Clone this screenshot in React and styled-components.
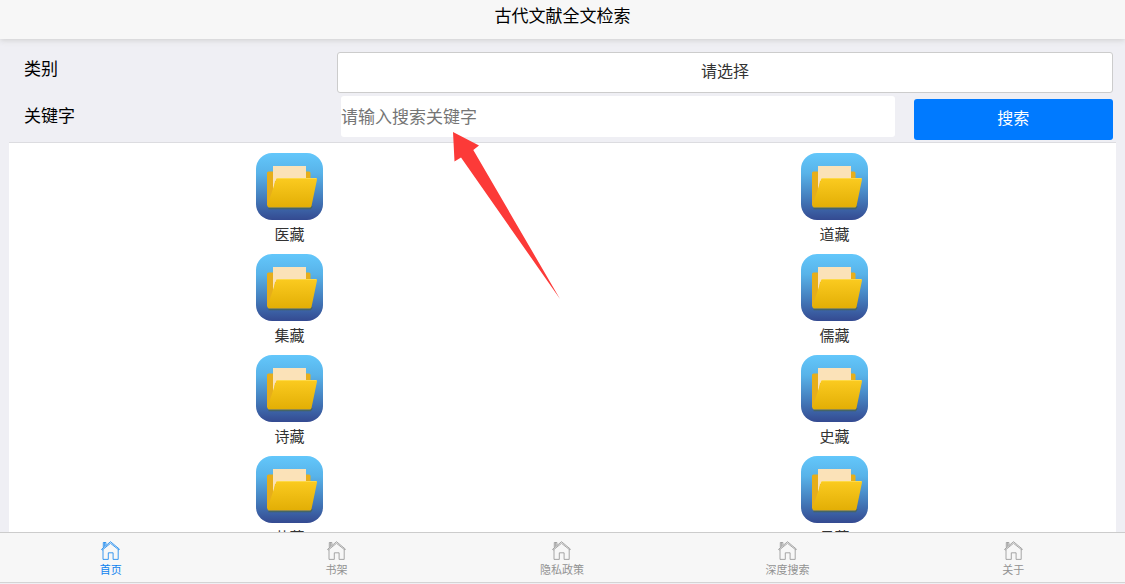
import React, { useId, useState } from "react";
import styled, { createGlobalStyle } from "styled-components";

const GlobalStyle = createGlobalStyle`
  * { box-sizing: border-box; }
  body {
    margin: 0;
    background: #efeff4;
    color: #000;
    font-family: "Noto Sans CJK SC", sans-serif;
    font-size: 17px;
    line-height: 20px;
  }
  button, input, select { font-family: inherit; margin: 0; }
`;

const Page = styled.div`
  display: flex;
  flex-direction: column;
  height: 100vh;
  overflow: hidden;
`;

const Header = styled.header`
  flex: none;
  padding: 5px 12px 14px;
  background: #f7f7f7;
  box-shadow: 0 1px 6px #ccc;
  text-align: center;
`;

const Title = styled.h1`
  margin: 0;
  font-size: 17px;
  font-weight: 400;
  line-height: 20px;
`;

const Content = styled.main`
  flex: 1;
  min-height: 0;
  display: flex;
  flex-direction: column;
  padding: 13px 9px 0;
`;

const SearchForm = styled.form`
  display: flex;
  flex-direction: column;
  gap: 3px;
  padding-bottom: 2px;
`;

const FormRow = styled.div`
  display: grid;
  grid-template-columns: ${(p) => (p.$withAction ? "30% 50% 20%" : "30% 70%")};
`;

const Label = styled.label`
  padding: ${(p) => p.$top}px 0 0 15px;
`;

const Category = styled.select`
  height: 41px;
  margin: 0 3px 0 -4px;
  padding: 0 0 5px;
  appearance: none;
  border: 1px solid #ccc;
  border-radius: 3px;
  background: #fff;
  color: #333;
  font-size: 16px;
  text-align: center;
  text-align-last: center;
`;

const KeywordField = styled.div`
  position: relative;
`;

const Keyword = styled.input`
  display: block;
  width: 100%;
  height: 41px;
  padding: 0 0 3px;
  border: 0;
  border-radius: 3px;
  background: #fff;
  font-size: 17px;
  &::placeholder { color: #757575; opacity: 1; }
`;

const SearchButton = styled.button`
  height: 41px;
  margin: 3px 3px 0 19px;
  padding: 0 0 5px;
  border: 0;
  border-radius: 3px;
  background: #007aff;
  color: #fff;
  font-size: 16px;
`;

const Pointer = styled.svg`
  position: absolute;
  top: 36px;
  left: 112px;
  width: 108px;
  height: 168px;
  pointer-events: none;
`;

const Library = styled.nav`
  flex: 1;
  min-height: 0;
  overflow: hidden;
  display: grid;
  grid-template-columns: 1fr 1fr;
  align-content: start;
  row-gap: 10px;
  padding: 10px 9px 0 8px;
  border-top: 1px solid #dcdce0;
  background: #fff;
`;

const Folder = styled.a`
  display: flex;
  flex-direction: column;
  align-items: center;
  gap: 4px;
  color: #333;
  font-size: 15px;
  text-decoration: none;
  svg { display: block; width: 67px; height: 67px; }
`;

const TabBar = styled.nav`
  flex: none;
  display: flex;
  margin: 0 -2px 1px -1px;
  border-top: 1px solid #ccc;
  border-bottom: 1px solid #d4d4d4;
  background: #f7f7f7;
`;

const Tab = styled.a`
  flex: 1;
  display: flex;
  flex-direction: column;
  align-items: center;
  gap: 2px;
  padding: 8px 2px 5px 0;
  color: ${(p) => (p.$active ? "#0d82ee" : "#929292")};
  font-size: 11px;
  line-height: 15px;
  text-decoration: none;
  svg { display: block; width: 19px; height: 19px; }
`;

function FolderIcon() {
  const id = useId();
  return (
    <svg viewBox="0 0 67 67" aria-hidden="true">
      <defs>
        <linearGradient id={id + "sky"} x1="0" y1="0" x2="0" y2="1">
          <stop offset="0" stopColor="#63c7fb" />
          <stop offset=".3" stopColor="#58b3e9" />
          <stop offset=".65" stopColor="#4580bf" />
          <stop offset="1" stopColor="#344a91" />
        </linearGradient>
        <linearGradient id={id + "front"} x1="0" y1="0" x2="0" y2="1">
          <stop offset="0" stopColor="#fbcb20" />
          <stop offset="1" stopColor="#e2ae05" />
        </linearGradient>
      </defs>
      <rect width="67" height="67" rx="16" fill={`url(#${id}sky)`} />
      <path d="M12.500 55.500H54.500L56 53" stroke="#4b663f" strokeOpacity=".65" strokeWidth="1.500" fill="none" />
      <path d="M12.500 18.500H53Q54.500 18.500 54.500 20V53H12.500Q11 53 11 51.500V20Q11 18.500 12.500 18.500Z" fill="#e6ae1a" />
      <path d="M17 13H50V28H19L17 42Z" fill="#fbe2b8" />
      <path d="M21.500 25H60Q61.200 25 61 26.500L55.500 53Q55.200 54.500 53.500 54.500H13Q11.300 54.500 11.500 52.500L20 26.500Q20.400 25 21.500 25Z" fill={`url(#${id}front)`} />
      <path d="M21 25.500H60.500" stroke="#ffe05a" strokeOpacity=".7" />
    </svg>
  );
}

function HomeIcon() {
  return (
    <svg viewBox="0 0 19 19" fill="none" stroke="currentColor" strokeWidth=".8" strokeLinejoin="round" aria-hidden="true">
      <path d="M.6 8.300 9.500.7 18.400 8.100 17.800 8.900 9.500 2.300 1.200 9.100Z" />
      <path d="M2.300 6.600V1.500H4.900V4.500M3.600 1.500V5.300" />
      <path d="M2 8.600V18.400H7.300V11.800H12.100V18.400H17.200V8.500" />
    </svg>
  );
}

const folders = ["医藏", "道藏", "集藏", "儒藏", "诗藏", "史藏", "艺藏", "易藏"];
const tabs = ["首页", "书架", "隐私政策", "深度搜索", "关于"];

export default function App() {
  const [keyword, setKeyword] = useState("");
  return (
    <>
      <GlobalStyle />
      <Page>
        <Header>
          <Title>古代文献全文检索</Title>
        </Header>
        <Content>
          <SearchForm onSubmit={(e) => e.preventDefault()}>
            <FormRow>
              <Label htmlFor="category" $top={6}>类别</Label>
              <Category id="category" defaultValue="">
                <option value="">请选择</option>
              </Category>
            </FormRow>
            <FormRow $withAction>
              <Label htmlFor="keyword" $top={9}>关键字</Label>
              <KeywordField>
                <Keyword
                  id="keyword"
                  type="text"
                  placeholder="请输入搜索关键字"
                  value={keyword}
                  onChange={(e) => setKeyword(e.target.value)}
                />
                <Pointer viewBox="0 0 108 168" aria-hidden="true">
                  <path d="M0 0 26 13.500 20.300 18 107 167 8 25.500 1.500 29.500Z" fill="#fc3a38" />
                </Pointer>
              </KeywordField>
              <SearchButton type="submit">搜索</SearchButton>
            </FormRow>
          </SearchForm>
          <Library aria-label="藏书">
            {folders.map((name) => (
              <Folder href="#" key={name}>
                <FolderIcon />
                {name}
              </Folder>
            ))}
          </Library>
        </Content>
        <TabBar>
          {tabs.map((name, i) => (
            <Tab href="#" key={name} $active={i === 0}>
              <HomeIcon />
              {name}
            </Tab>
          ))}
        </TabBar>
      </Page>
    </>
  );
}
